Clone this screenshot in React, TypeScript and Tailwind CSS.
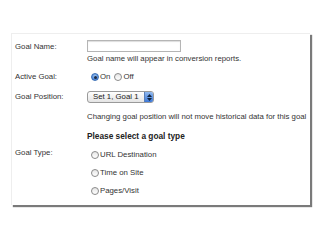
function Radio({ checked }: { checked?: boolean }) {
  return checked ? (
    <span className="inline-flex items-center justify-center w-[8px] h-[8px] rounded-full border border-[#3a6fb5] bg-[radial-gradient(circle_at_50%_35%,#9cc3f0,#2f6fd0)] shrink-0">
      <span className="w-[3px] h-[3px] rounded-full bg-[#1b2a44]" />
    </span>
  ) : (
    <span className="inline-block w-[8px] h-[8px] rounded-full border border-[#8a8a8a] bg-[linear-gradient(#e6e6e6,#ffffff)] shrink-0" />
  );
}

export default function App() {
  return (
    <div className="w-[320px] h-[240px] bg-white pt-[33px] pl-[11px] font-['Liberation_Sans',Arial,sans-serif] text-[7.8px] leading-[10px] text-[#333] whitespace-nowrap">
      <div className="w-[299px] h-[172px] border-t border-l border-[#eeeeee] shadow-[2px_2px_1px_#7a7a7a] bg-white">
        {/* Goal Name */}
        <div className="flex mt-[6px]">
          <div className="w-[75px] shrink-0 pl-[3px] pt-[2px]">Goal Name:</div>
          <div className="flex flex-col">
            <div className="w-[94px] h-[12px] border border-[#b5b5b5] bg-white shadow-[inset_0_1px_1px_#ddd]" />
            <div className="mt-[2px]">Goal name will appear in conversion reports.</div>
          </div>
        </div>

        {/* Active Goal */}
        <div className="flex mt-[8px]">
          <div className="w-[75px] shrink-0 pl-[3px]">Active Goal:</div>
          <div className="flex items-center pl-[4px]">
            <Radio checked />
            <span className="ml-[1px]">On</span>
            <span className="ml-[4px] flex">
              <Radio />
            </span>
            <span className="ml-[1px]">Off</span>
          </div>
        </div>

        {/* Goal Position */}
        <div className="flex items-center mt-[9px]">
          <div className="w-[75px] shrink-0 pl-[3px]">Goal Position:</div>
          <div className="flex items-center w-[67px] h-[12px] rounded-[3px] border border-[#9a9a9a] bg-[linear-gradient(#ffffff,#e4e4e4)] overflow-hidden">
            <span className="flex-1 pl-[5px] text-[#222]">Set 1, Goal 1</span>
            <span className="w-[9px] h-full flex flex-col items-center justify-center gap-[1px] bg-[linear-gradient(#8fb8ef,#3c78d8)] border-l border-[#5a7fb8]">
              <svg width="5" height="3" viewBox="0 0 5 3">
                <path d="M0 3 L2.5 0 L5 3 Z" fill="#10243f" />
              </svg>
              <svg width="5" height="3" viewBox="0 0 5 3">
                <path d="M0 0 L2.5 3 L5 0 Z" fill="#10243f" />
              </svg>
            </span>
          </div>
        </div>

        {/* Note */}
        <div className="flex mt-[9px]">
          <div className="w-[75px] shrink-0" />
          <div>Changing goal position will not move historical data for this goal</div>
        </div>

        {/* Heading */}
        <div className="flex mt-[9px]">
          <div className="w-[75px] shrink-0" />
          <div className="font-bold text-[8.3px] text-[#222]">Please select a goal type</div>
        </div>

        {/* Goal Type */}
        <div className="flex mt-[9px]">
          <div className="w-[75px] shrink-0 pl-[3px] -mt-[2px]">Goal Type:</div>
          <div className="flex flex-col gap-[8px] pl-[4px]">
            <div className="flex items-center">
              <Radio />
              <span className="ml-[1px]">URL Destination</span>
            </div>
            <div className="flex items-center">
              <Radio />
              <span className="ml-[1px]">Time on Site</span>
            </div>
            <div className="flex items-center">
              <Radio />
              <span className="ml-[1px]">Pages/Visit</span>
            </div>
          </div>
        </div>
      </div>
    </div>
  );
}
